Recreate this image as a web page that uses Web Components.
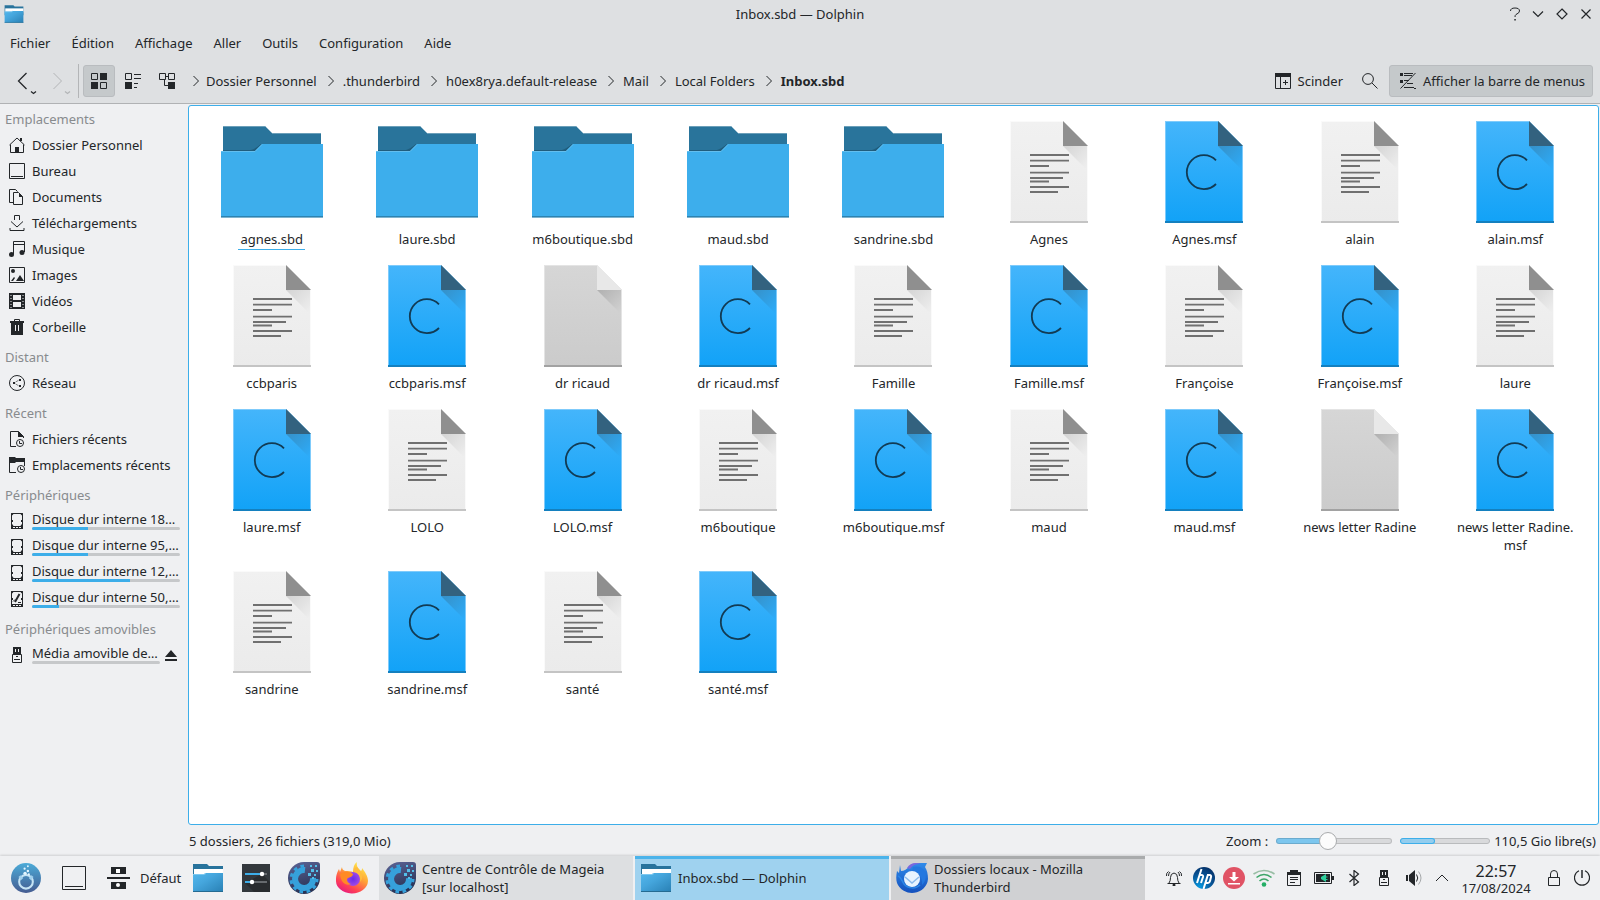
<!DOCTYPE html>
<html lang="fr">
<head>
<meta charset="utf-8">
<title>Inbox.sbd — Dolphin</title>
<style>
  body {
    margin: 0;
    font: 13px/18px "Noto Sans", sans-serif;
    color: #232629;
    background: #eff0f2;
  }
</style>
</head>
<body>
<desktop-screen></desktop-screen>

<script>
// name: [width, height, markup]; strokes use the current colour, class "f" is a fill
const icons = {
  folder: [112, 112, `
    <path fill="#29749b" stroke="none" d="M7 10h42l7 7h49v20H7z"/>
    <path stroke="#6b9fb9" d="M56 17.5h49M7 10.5h42"/>
    <path fill="#205d7d" stroke="none" d="M7 34h28q4-1 10-6v8H7z"/>
    <path fill="#3daeec" stroke="none" d="M5 35h34l7-7h61v73H5z"/>
    <path stroke="#63beee" d="M5 35.5h34l7-7"/>
    <path stroke="#2d83b1" d="M5 100.5h102"/>
    <path stroke="#7fb4cf" d="M5 101.5h102"/>`],
  text: [112, 112, `
    <defs>
      <linearGradient id="p" x2="0" y2="1"><stop stop-color="#f1f1f1"/><stop offset="1" stop-color="#ebebeb"/></linearGradient>
      <linearGradient id="s" x2="1" y2="1"><stop stop-color="#d4d4d4"/><stop offset=".9" stop-color="#eee"/></linearGradient>
    </defs>
    <path fill="url(#p)" stroke="none" d="M17 5h53l25 25v77H17z"/>
    <path fill="url(#s)" stroke="none" d="M70 30l25 25V30z"/>
    <path fill="#8f8f8f" stroke="none" d="M70 5l25 25H70z"/>
    <path stroke="#fafafa" d="M17 5.5h53M17.5 6v100M94.5 30v76"/>
    <path stroke="#c4c4c4" stroke-width="2" d="M17 106h78"/>
    <path stroke="#707070" stroke-width="1.8" d="M37 39h39M37 44.6h39M37 50h19M37 56.6h39M37 62h33M37 65.5h19M37 71h39M37 76h28"/>`],
  msf: [112, 112, `
    <defs>
      <linearGradient id="p" x2="0" y2="1"><stop stop-color="#44b5fb"/><stop offset="1" stop-color="#11a2f7"/></linearGradient>
      <linearGradient id="s" x2="1" y2="1"><stop stop-color="#3690c7"/><stop offset=".9" stop-color="#2dabf8"/></linearGradient>
    </defs>
    <path fill="url(#p)" stroke="none" d="M17 5h53l25 25v77H17z"/>
    <path fill="url(#s)" stroke="none" d="M70 30l25 25V30z"/>
    <path fill="#33627f" stroke="none" d="M70 5l25 25H70z"/>
    <path stroke="#7fcbfb" d="M17 5.5h53M17.5 6v100M94.5 30v76"/>
    <path stroke="#1480bf" stroke-width="2" d="M17 106h78"/>
    <path stroke="#123b54" stroke-width="1.8" d="M68 44.3A17 17 0 1 0 68 68"/>`],
  blank: [112, 112, `
    <defs>
      <linearGradient id="p" x2="0" y2="1"><stop stop-color="#d6d6d6"/><stop offset="1" stop-color="#cbcbcb"/></linearGradient>
      <linearGradient id="s" x2="1" y2="1"><stop stop-color="#b0b0b0"/><stop offset=".9" stop-color="#d1d1d1"/></linearGradient>
    </defs>
    <path fill="url(#p)" stroke="none" d="M17 5h53l25 25v77H17z"/>
    <path fill="url(#s)" stroke="none" d="M70 30l25 25V30z"/>
    <path fill="#e8e8e8" stroke="none" d="M70 5l25 25H70z"/>
    <path stroke="#e4e4e4" d="M17 5.5h53M17.5 6v100M94.5 30v76"/>
    <path stroke="#a2a2a2" stroke-width="2" d="M17 106h78"/>`],
  folderApp: [32, 32, `
    <defs><linearGradient id="a" x2="1" y2="1"><stop stop-color="#53b7ec"/><stop offset=".4" stop-color="#45a6dd"/><stop offset="1" stop-color="#2980b4"/></linearGradient></defs>
    <path fill="#28739c" stroke="none" d="M1 2h14l2 2h14v14H1z"/>
    <path fill="#fff" stroke="none" d="M2 7h29v6H2z"/>
    <path fill="url(#a)" stroke="none" d="M1 12h11l2-1h17v19H1z"/>
    <path stroke="#7cc8f0" d="M1 12.5h11l2-1"/>
    <path stroke="#256b92" d="M1 29.5h30"/>`],
  back: [28, 32, `<path d="M14.5 8l-8 8 8 8" stroke-width="1.3"/><path d="M19 26.5l2.5 2 2.5-2" stroke-width="1.3"/>`],
  forward: [28, 32, `<path d="M7.5 8l8 8-8 8"/><path d="M19 26.5l2.5 2 2.5-2" stroke-width="1.3"/>`],
  grid: [16, 16, `<path d="M.5.5h6v6h-6zM9.5 9.5h6v6h-6z"/><path class="f" d="M9 0h7v7H9zM0 9h7v7H0z"/>`],
  compact: [16, 16, `<path d="M.5.5h6v6h-6zM9 1.5h7M9 5.5h7M9 10.5h4M9 14.5h3"/><path class="f" d="M0 9h7v7H0z"/>`],
  tree: [16, 16, `<path d="M.5.5h6v6h-6zM9.5.5h6v6h-6zM7 3.5h2M5.5 7v5.5h4"/><path class="f" d="M9 9h7v7H9z"/>`],
  crumb: [6, 12, `<path d="M.5 1l5 5-5 5"/>`],
  split: [16, 16, `<path d="M.5.5h15v15H.5zM5.5 4v12M8 9.5h5M10.5 7v5"/><path class="f" d="M0 0h16v4H0z"/>`],
  search: [16, 16, `<circle cx="6" cy="6" r="5.4"/><path d="M10 10l5.5 5.5"/>`],
  menus: [16, 16, `<path class="f" d="M0 0h3v3H0zM0 7h3v3H0zM14 15h2v1h-2z"/><path d="M4 .5h9M4 2.5h8M4 7.5h5M7 10.5h6M4 14.5h10M15.5 0L.5 15.5"/>`],
  help: [14, 14, `<path d="M2.5 4Q2.5 1 7 1t4.5 3Q11.5 6 8 7.5 7 8 7 10"/><path class="f" d="M6.3 12h1.5v1.5H6.3z"/>`],
  down: [12, 12, `<path d="M1 3.5l5 5 5-5" stroke-width="1.2"/>`],
  diamond: [12, 12, `<path d="M6 1l5 5-5 5-5-5z" stroke-width="1.2"/>`],
  close: [12, 12, `<path d="M1.5 1.5l9 9m0-9l-9 9" stroke-width="1.2"/>`],
  home: [16, 16, `<path d="M.5 8L8 1l7.5 7M1.5 7.5v8h13v-8"/><path class="f" d="M6 10h4v6H6zM11 1h2v3h-2z"/>`],
  desk: [16, 16, `<path d="M.5.5h15v15H.5zM2 13.5h12"/>`],
  docs: [16, 16, `<path d="M4 13.5H.5V.5h6l2 2M4.5 3.5h5l4 4v8h-9z"/><path class="f" d="M5 0l5 4v4h4L9 3z"/>`],
  download: [16, 16, `<path d="M5.5 5V.5h5V5M2 6.5L8 12l6-5.5M1 13v2.5h14V13"/>`],
  music: [16, 16, `<path d="M4.5 13V.5h11V11M4.5 3.5h11"/><circle class="f" cx="2.5" cy="13.5" r="2.5"/><circle class="f" cx="13" cy="11.5" r="2.5"/>`],
  image: [16, 16, `<path d="M.5.5h15v15H.5z"/><circle class="f" cx="4" cy="4" r="2"/><path class="f" d="M7 14l4-6 4 6zM2 14l3-4 1 1-2 3z"/>`],
  video: [16, 16, `<path class="f" d="M0 0h4v16H0zM12 0h4v16h-4z"/><path d="M1 1h14M1 15h14M3 8h10" stroke-width="2"/><path stroke="#eff0f2" stroke-dasharray="1 2" d="M2 2v13M14 2v13"/>`],
  trash: [16, 16, `<path class="f" d="M1 2h14v2h-1v12H2V4H1z"/><path d="M5.5 2V.5h5V2"/><path stroke="#eff0f2" d="M6.5 6v6M9.5 6v6"/>`],
  network: [16, 16, `<circle cx="8" cy="8" r="7.5"/><path stroke-dasharray="1 1" d="M5 8l5-3M5 8l5 3"/><path class="f" d="M4 7h2v2H4zM10 4h2v2h-2zM10 10h2v2h-2z"/>`],
  recentFile: [16, 16, `<path d="M7 15.5H1.5V.5h8l5 5V7"/><path class="f" d="M9 0l6 6H9z"/><circle cx="11" cy="12" r="3.5"/><path d="M10.5 10v2.5H13"/>`],
  recentDir: [16, 16, `<path class="f" d="M0 0h6l1 1h9v4H7L6 6H0z"/><path d="M.5 6v9.5H7M15.5 5v4"/><circle cx="12" cy="12" r="3.5"/><path d="M11.5 10v2.5H14"/>`],
  disk: [16, 16, `<path d="M2.5.5h11v15h-11zM3 13.5h10M6.5 13v3M9.5 13v3"/><path class="f" d="M2 0h3L3.5 2.5zM14 0h-3l1.5 2.5zM2 14l1.5-3L5 14zM14 14l-1.5-3-1.5 3zM3 7h1v2H3zM12 7h1v2h-1zM2 14h2v2H2zM12 14h2v2h-2z"/>`],
  diskRoot: [16, 16, `<path d="M2.5.5h11v15h-11zM3 13.5h10M6.5 13v3M9.5 13v3"/><path class="f" d="M2 0h3L3.5 2.5zM14 0h-3l1.5 2.5zM2 14h2v2H2zM12 14h2v2h-2zM3 7h1v2H3zM12 7h1v2h-1z"/><path d="M10.5 3L6 11" stroke-width="2"/><path d="M4 10.5l2-2M9 11.5h3"/>`],
  usb: [16, 16, `<path class="f" d="M4 0h8v7H4z"/><path d="M3.5 7.5h9v8h-9zM5 12.5h6M7 9.5h2"/><path stroke="#eff0f2" d="M6.5 2v3M9.5 2v3"/>`],
  eject: [12, 12, `<path class="f" d="M0 8l6-7 6 7zM0 10h12v2H0z"/>`],
  mageia: [32, 32, `
    <defs><linearGradient id="m" x2="0" y2="1"><stop stop-color="#4cabd8"/><stop offset="1" stop-color="#455c91"/></linearGradient></defs>
    <circle cx="16" cy="16" r="16" fill="url(#m)" stroke="none"/>
    <circle cx="16" cy="20" r="7.3" stroke="#c6e4f5" stroke-width="2.2"/>
    <path stroke="#9fd0ee" stroke-width="3" d="M9 14l3 3M23 14l-3 3"/>
    <g fill="#e4f6ff" stroke="none"><circle cx="15" cy="11" r="1.8"/><circle cx="18" cy="8.5" r="1.3"/><circle cx="14.5" cy="6" r="1.2"/><circle cx="18" cy="3.5" r="1"/><circle cx="19" cy="12" r="1.2"/></g>`],
  desktop: [24, 24, `<path d="M.5.5h23v23H.5zM3 20.5h18"/>`],
  activity: [24, 24, `<path class="f" d="M5 1h15v7H5zM1 11h23v2H1zM5 16h15v7H5z"/><path fill="#fff" stroke="none" d="M10 3h4v4h-4z"/><circle cx="12" cy="19" r="2" fill="#fff" stroke="none"/>`],
  settings: [32, 32, `
    <path fill="#33383d" stroke="none" d="M2 2h28v28H2z"/><path fill="#292c2f" stroke="none" d="M5 21l17-9 8 8v10H14z"/>
    <path stroke="#3daee9" stroke-width="2" d="M5 12h18M5 20h8"/><path stroke="#666a6e" stroke-width="2" d="M24 12h3M13 20h14"/>
    <g fill="#fff" stroke="none"><circle cx="22" cy="12" r="2.2"/><circle cx="12" cy="20" r="2.2"/></g>`],
  gear: [32, 32, `
    <defs><linearGradient id="g" x2=".3" y2="1"><stop stop-color="#5d6597"/><stop offset="1" stop-color="#283153"/></linearGradient></defs>
    <path fill="url(#g)" stroke="none" d="M16 0h13q3 0 3 3v13A16 16 0 1 1 16 0z"/>
    <path stroke="#36a1db" stroke-width="6" d="M17 8A9 9 0 1 0 25 16"/>
    <path stroke="#36a1db" stroke-width="3" stroke-dasharray="3.6 3.6" d="M16 4A13 13 0 1 0 29 17"/>
    <g fill="#53bfe9" stroke="none"><path d="M23 7h3v3h-3zM20 11h3v3h-3zM26 12h2v2h-2zM28 8h2v2h-2zM22 3h2v2h-2zM27 3h2v2h-2zM24 15h2v2h-2z"/></g>`],
  firefox: [32, 32, `
    <defs>
      <linearGradient id="f" x1=".8" x2=".2" y2="1"><stop stop-color="#fff44f"/><stop offset=".4" stop-color="#ffa436"/><stop offset=".75" stop-color="#ff4055"/><stop offset="1" stop-color="#e31587"/></linearGradient>
      <radialGradient id="v"><stop stop-color="#6a2bea"/><stop offset="1" stop-color="#a04ae8"/></radialGradient>
    </defs>
    <path fill="url(#f)" stroke="none" d="M21 0c-1 4 1 6 4 9 1-1 1-2 1-3 3 4 6 8 6 13a16 13 0 0 1-32-1C0 12 2 9 3 7l1 3 2-5c0 2 1 3 3 4 4 0 6 0 8 1 0-4 1-8 4-10z"/>
    <circle cx="17" cy="17" r="7" fill="url(#v)" stroke="none"/>
    <path fill="#ff8a25" stroke="none" d="M4 12c4-3 9-3 13 0 0 2-2 3-5 4-2 1-1 5 3 6-4 2-10 0-11-10z"/>
    <path fill="#ffbd3e" stroke="none" d="M18 10c5 1 7 5 6 10 3-3 3-7 0-11l-3-4c-3 1-3 3-3 5z"/>`],
  thunderbird: [32, 32, `
    <defs><linearGradient id="t" x2="0" y2="1"><stop stop-color="#2f8bea"/><stop offset="1" stop-color="#1450bd"/></linearGradient></defs>
    <path fill="url(#t)" stroke="none" d="M4 3l1 6c3 0 6-2 9-5 3-3 7-3 11-3h6l-2 4c2 3 3 7 3 12A16 15 0 0 1 1 21C0 18 0 14 1 9l2 2z"/>
    <path fill="#7a68de" stroke="none" d="M11 6c3-5 8-6 14-4-6 0-8 1-11 5z"/>
    <path fill="#2378e0" stroke="none" d="M17 5c6-2 11 1 13 7 0 5-1 8-4 11 1-7-3-13-10-14z"/>
    <circle cx="16" cy="17" r="8" fill="#e8f4ff" stroke="none"/>
    <path stroke="#8dbbec" stroke-width="1.5" d="M9 15l7 6 7-6"/>
    <path stroke="#2b86e6" stroke-width="1.5" d="M2 14c3 1 4 5 6 8 4 5 12 5 16 1"/>`],
  bell: [16, 16, `<path d="M1.5 13.5h13M3 13q1.5-2 1.5-5.5 0-4 3.5-4.5 3.5.5 3.5 4.5Q11.5 11 13 13M2.5 1.5Q0 3 .5 6M13.5 1.5Q16 3 15.5 6M4 2Q2.5 3.5 2.5 6M12 2q1.5 1.5 1.5 4"/><circle class="f" cx="8" cy="15" r="1.5"/>`],
  hp: [22, 22, `
    <defs><radialGradient id="h" cx=".3" cy=".9" r="1"><stop stop-color="#0598e0"/><stop offset=".6" stop-color="#085091"/><stop offset="1" stop-color="#062d62"/></radialGradient></defs>
    <circle cx="11" cy="11" r="11" fill="url(#h)" stroke="none"/>
    <path stroke="#fff" stroke-width="2" d="M8.5 2L4 16M6.5 8h2q2 0 1.5 2L8 16M15 7.5L10.5 22M14 8h2.5q2 0 1.5 2l-1 4q-.5 2-2 2h-2.5"/>`],
  update: [22, 22, `<circle cx="11" cy="11" r="11" fill="#e05365" stroke="none"/><path fill="#fff" stroke="none" d="M9.5 5h3v5H16l-5 4.5L6 10h3.5zM5 16h12v1.5H5z"/>`],
  wifi: [22, 22, `<path stroke="#98bda4" stroke-width="1.6" d="M.5 7Q11 0 21.5 7"/><path stroke="#3da568" stroke-width="1.6" d="M3.5 10.5q7.5-6 15 0M6.5 14q4.5-4 9 0"/><circle cx="11" cy="17.5" r="2.3" fill="#22ae65" stroke="none"/>`],
  clip: [16, 16, `<path d="M1.5 2.5h13v13h-13zM4 7.5h8M4 9.5h8M4 12.5h5"/><path class="f" d="M4 0h8v2h3v3H1V2h3z"/>`],
  battery: [20, 12, `<path d="M.5.5h17v11H.5z"/><path class="f" d="M2 2h14v8H2zM18 4h2v4h-2z"/><path fill="#2fd09d" stroke="none" d="M7 5l5-3v2.5h1.5v1H12V7h1.5v1H12v2L7 7z"/>`],
  bluetooth: [16, 16, `<path d="M3.5 4l9 8L8 15.5V.5L12.5 4l-9 8" stroke-width="1.2"/>`],
  volume: [16, 16, `<path class="f" d="M0 5h2v6H0zM3 5l6-5v16l-6-5z"/><path d="M10.5 4.5q2.5 3.5 0 7"/><path stroke="#a5a8aa" d="M12.5 1.5q5 6.5 0 13"/>`],
  up: [12, 12, `<path d="M0 9l6-6 6 6"/>`],
  lock: [12, 16, `<path d="M.5 7.5h11v8H.5zM2.5 7V4Q2.5.5 6 .5T9.5 4v3"/>`],
  power: [16, 16, `<path d="M5 .8a7.5 7.5 0 1 0 6 0" stroke-width="1.2"/><path d="M8 0v8" stroke-width="1.5"/>`],
};

// setup runs on the detached copy, so nested elements connect with their attributes in place
const define = (name, css, markup, setup) => {
  const template = document.createElement("template");
  template.innerHTML = `<style>
    :host { display: block; box-sizing: border-box; }
    * { box-sizing: border-box; }
    button { font: inherit; color: inherit; background: none; border: 0; padding: 0; margin: 0; }
    a { color: inherit; text-decoration: none; }
    ${css}
  </style>${markup}`;

  window.customElements.define(name, class extends HTMLElement {
    constructor() {
      super();
      this.attachShadow({ mode: "open" });
    }

    connectedCallback() {
      if (this.shadowRoot.childNodes.length) return;
      const content = template.content.cloneNode(true);
      if (setup) setup(this, content);
      this.shadowRoot.appendChild(content);
    }
  });
};

define("app-icon", `
  :host { flex: none; }
  svg { display: block; fill: none; stroke: currentColor; }
  .f { fill: currentColor; stroke: none; }
`, `<svg aria-hidden="true"></svg>`, (host, root) => {
  const [w, h, markup] = icons[host.getAttribute("name")];
  const size = Number(host.getAttribute("size")) || w;
  const svg = root.querySelector("svg");
  svg.setAttribute("viewBox", `0 0 ${w} ${h}`);
  svg.setAttribute("width", size);
  svg.setAttribute("height", size * h / w);
  svg.innerHTML = markup;
});

define("title-bar", `
  :host { display: grid; grid-template-columns: 1fr auto 1fr; align-items: center; height: 28px; padding: 0 4px; }
  .buttons { display: flex; justify-content: flex-end; gap: 12px; padding-right: 4px; }
  button { display: grid; place-items: center; width: 12px; height: 16px; }
`, `
  <app-icon name="folderApp" size="20"></app-icon>
  <span><slot></slot></span>
  <div class="buttons">
    <button aria-label="Aide"><app-icon name="help"></app-icon></button>
    <button aria-label="Réduire"><app-icon name="down"></app-icon></button>
    <button aria-label="Agrandir"><app-icon name="diamond"></app-icon></button>
    <button aria-label="Fermer"><app-icon name="close"></app-icon></button>
  </div>
`);

define("menu-bar", `
  nav { display: flex; gap: 1px; height: 30px; }
  button { padding: 0 10px; }
`, `
  <nav>
    <button>Fichier</button><button>Édition</button><button>Affichage</button><button>Aller</button>
    <button>Outils</button><button>Configuration</button><button>Aide</button>
  </nav>
`);

define("tool-button", `
  button { display: flex; align-items: center; gap: 7px; height: 32px; padding: 0 7px; border: 1px solid transparent; border-radius: 3px; white-space: nowrap; }
  :host([flat]) button { padding: 0; border: 0; }
  :host([wide]) button { padding: 0 7px 0 10px; }
  :host([active]) button { background: #c5c9cb; border-color: #b9bcbf; }
  :host([off]) { color: #b3b5b7; }
`, `<button><app-icon></app-icon><slot></slot></button>`, (host, root) => {
  root.querySelector("app-icon").setAttribute("name", host.getAttribute("icon"));
  root.querySelector("button").setAttribute("aria-label", host.title || host.textContent);
  root.querySelector("button").disabled = host.hasAttribute("off");
});

define("path-bar", `
  nav { display: flex; align-items: center; white-space: nowrap; }
  app-icon { margin: 0 9px 0 11px; }
  app-icon:first-child { margin: 0 7px 0 0; }
  a:last-child { font-weight: bold; }
`, `<nav aria-label="Chemin"></nav>`, (host, root) => {
  root.querySelector("nav").innerHTML = host.getAttribute("path").split("/")
    .map(part => `<app-icon name="crumb"></app-icon><a href="#">${ part }</a>`).join("");
});

define("tool-bar", `
  :host { display: flex; align-items: center; height: 46px; padding: 0 7px 0 12px; border-bottom: 1px solid #b0b2b4; }
  .history { display: flex; gap: 6px; }
  .rule { width: 1px; height: 34px; margin: 0 4px; background: #b3b5b7; }
  .modes { display: flex; gap: 2px; }
  path-bar { flex: 1; margin-left: 10px; }
  .right { display: flex; gap: 3px; }
`, `
  <div class="history">
    <tool-button flat icon="back" title="Précédent"></tool-button>
    <tool-button flat off icon="forward" title="Suivant"></tool-button>
  </div>
  <div class="rule"></div>
  <div class="modes">
    <tool-button active icon="grid" title="Icônes"></tool-button>
    <tool-button icon="compact" title="Compact"></tool-button>
    <tool-button icon="tree" title="Détails"></tool-button>
  </div>
  <path-bar path="Dossier Personnel/.thunderbird/h0ex8rya.default-release/Mail/Local Folders/Inbox.sbd"></path-bar>
  <div class="right">
    <tool-button wide icon="split">Scinder</tool-button>
    <tool-button icon="search" title="Rechercher"></tool-button>
    <tool-button wide active icon="menus">Afficher la barre de menus</tool-button>
  </div>
`);

define("place-item", `
  a { display: flex; align-items: center; gap: 7px; height: 26px; padding: 0 8px 0 9px; }
  .label { flex: 1; display: grid; white-space: nowrap; }
  progress { display: block; appearance: none; width: 100%; height: 3px; border: 0; margin: -1px 0 2px; border-radius: 2px; overflow: hidden; }
  progress::-webkit-progress-bar { background: #c6c8ca; }
  progress::-webkit-progress-value { background: #3daee9; }
  .eject { margin: 0 3px 0 -2px; }
`, `<a href="#"><app-icon></app-icon><span class="label"><slot></slot></span></a>`, (host, root) => {
  root.querySelector("app-icon").setAttribute("name", host.getAttribute("icon"));
  if (host.hasAttribute("used")) {
    root.querySelector(".label").insertAdjacentHTML("beforeend",
      `<progress max="100" value="${ host.getAttribute("used") }" aria-label="Espace utilisé"></progress>`);
  }
  if (host.hasAttribute("removable")) {
    root.querySelector("a").insertAdjacentHTML("beforeend", `<app-icon class="eject" name="eject"></app-icon>`);
  }
});

define("place-group", `
  h2 { margin: 0; padding: 4px 5px 0; font: inherit; line-height: 26px; color: #888b8e; }
  :host(:first-of-type) h2 { padding-top: 0; }
`, `<h2></h2><slot></slot>`, (host, root) => {
  root.querySelector("h2").textContent = host.getAttribute("label");
});

define("places-panel", `
  :host { width: 188px; padding-top: 2px; }
`, `
  <place-group label="Emplacements">
    <place-item icon="home">Dossier Personnel</place-item>
    <place-item icon="desk">Bureau</place-item>
    <place-item icon="docs">Documents</place-item>
    <place-item icon="download">Téléchargements</place-item>
    <place-item icon="music">Musique</place-item>
    <place-item icon="image">Images</place-item>
    <place-item icon="video">Vidéos</place-item>
    <place-item icon="trash">Corbeille</place-item>
  </place-group>
  <place-group label="Distant">
    <place-item icon="network">Réseau</place-item>
  </place-group>
  <place-group label="Récent">
    <place-item icon="recentFile">Fichiers récents</place-item>
    <place-item icon="recentDir">Emplacements récents</place-item>
  </place-group>
  <place-group label="Périphériques">
    <place-item icon="disk" used="38">Disque dur interne 18…</place-item>
    <place-item icon="disk" used="38">Disque dur interne 95,…</place-item>
    <place-item icon="disk" used="66">Disque dur interne 12,…</place-item>
    <place-item icon="diskRoot" used="18">Disque dur interne 50,…</place-item>
  </place-group>
  <place-group label="Périphériques amovibles">
    <place-item icon="usb" used="0" removable>Média amovible de…</place-item>
  </place-group>
`);

define("file-item", `
  a { display: flex; flex-direction: column; align-items: center; gap: 2px; padding: 0 8px; text-align: center; }
  span { padding: 0 2px; }
  :host([current]) span { padding-bottom: 1px; margin-bottom: -2px; border-bottom: 1px solid #3daee9; }
`, `<a href="#"><app-icon></app-icon><span><slot></slot></span></a>`, (host, root) => {
  root.querySelector("app-icon").setAttribute("name", host.getAttribute("type"));
});

const files = [
  "agnes.sbd", "laure.sbd", "m6boutique.sbd", "maud.sbd", "sandrine.sbd",
  "Agnes", "Agnes.msf", "alain", "alain.msf", "ccbparis", "ccbparis.msf",
  "dr ricaud", "dr ricaud.msf", "Famille", "Famille.msf", "Françoise",
  "Françoise.msf", "laure", "laure.msf", "LOLO", "LOLO.msf", "m6boutique",
  "m6boutique.msf", "maud", "maud.msf", "news letter Radine",
  "news letter Radine.msf", "sandrine", "sandrine.msf", "santé", "santé.msf",
];
const empty = [ "dr ricaud", "news letter Radine" ];

function fileType(name) {
  if (name.endsWith(".sbd")) return "folder";
  if (name.endsWith(".msf")) return "msf";
  return empty.includes(name) ? "blank" : "text";
}

define("file-view", `
  :host { margin: 1px 1px 0 0; border: 1px solid #3daee9; border-radius: 3px; background: #fff; }
  main { display: grid; grid-template-columns: repeat(9, 1fr); gap: 12px 0; padding: 10px 5px; }
`, `<main></main>`, (host, root) => {
  root.querySelector("main").innerHTML = files.map((name, i) =>
    `<file-item type="${ fileType(name) }"${ i ? "" : " current" }>${ name.replace(".msf", ".<wbr>msf") }</file-item>`
  ).join("");
});

define("status-bar", `
  :host { display: flex; align-items: center; height: 31px; padding: 0 4px 0 1px; }
  .info { flex: 1; }
  input { appearance: none; width: 116px; height: 18px; margin: 0 8px; background: none; }
  input::-webkit-slider-runnable-track {
    height: 6px; border-radius: 3px; box-shadow: inset 0 0 0 1px #0002;
    background: linear-gradient(90deg, #7cc6ee 45%, #d9dadc 45%);
  }
  input::-webkit-slider-thumb {
    appearance: none; width: 18px; height: 18px; margin-top: -6px;
    border: 1px solid #a9abad; border-radius: 50%; background: #fcfcfc;
  }
  progress { appearance: none; width: 90px; height: 6px; margin-right: 4px; border: 0; border-radius: 3px; overflow: hidden; }
  progress::-webkit-progress-bar { background: #d9dadc; border-radius: 3px; box-shadow: inset 0 0 0 1px #b9bbbd; }
  progress::-webkit-progress-value { background: #93cdee; border-radius: 3px; box-shadow: inset 0 0 0 1px #3daee9; }
`, `
  <span class="info">5 dossiers, 26 fichiers (319,0 Mio)</span>
  <label for="zoom">Zoom :</label>
  <input id="zoom" type="range" min="0" max="100" value="44">
  <progress max="100" value="39" aria-label="Espace disque"></progress>
  <span>110,5 Gio libre(s)</span>
`);

define("dolphin-window", `
  :host { flex: 1; display: flex; flex-direction: column; min-height: 0; }
  header { background: #dee0e2; }
  .body { flex: 1; display: flex; }
  .content { flex: 1; display: flex; flex-direction: column; }
  file-view { flex: 1; }
`, `
  <header>
    <title-bar>Inbox.sbd — Dolphin</title-bar>
    <menu-bar></menu-bar>
    <tool-bar></tool-bar>
  </header>
  <div class="body">
    <places-panel></places-panel>
    <div class="content">
      <file-view></file-view>
      <status-bar></status-bar>
    </div>
  </div>
`);

define("task-button", `
  :host { flex: 1; display: flex; }
  button { flex: 1; display: flex; align-items: center; gap: 6px; padding: 0 5px; text-align: left; background: #dddfe1; }
  :host([state=active]) button { background: #9fd2ef; box-shadow: inset 0 3px #4bb3ea; }
  :host([state=attention]) button { background: #d0d1d3; box-shadow: inset 0 3px #a9abac; }
`, `<button><app-icon size="32"></app-icon><span><slot></slot></span></button>`, (host, root) => {
  root.querySelector("app-icon").setAttribute("name", host.getAttribute("icon"));
});

define("task-bar", `
  :host { display: flex; height: 44px; padding: 0 4px 0 2px; background: #eff0f2; box-shadow: 0 -1px 2px #0002; }
  button { display: grid; place-items: center; }
  .launch { display: flex; }
  .launch button { width: 48px; }
  .launch .activity { display: flex; width: 86px; align-items: center; padding-left: 8px; gap: 10px; }
  .tasks { flex: 1; display: flex; gap: 2px; margin: 0 14px 0 3px; }
  .tray { display: flex; }
  .tray button { width: 30px; }
  .tray .more { width: 26px; }
  .clock { width: 82px; padding-top: 5px; margin-right: 3px; text-align: center; line-height: 14px; }
  .clock time { display: block; font-size: 16px; line-height: 20px; }
  .session { display: flex; }
  .session button { width: 28px; }
`, `
  <div class="launch">
    <button aria-label="Menu"><app-icon name="mageia" size="30"></app-icon></button>
    <button aria-label="Bureau"><app-icon name="desktop"></app-icon></button>
    <button class="activity"><app-icon name="activity"></app-icon>Défaut</button>
    <button aria-label="Fichiers"><app-icon name="folderApp"></app-icon></button>
    <button aria-label="Réglages"><app-icon name="settings"></app-icon></button>
    <button aria-label="Centre de contrôle"><app-icon name="gear"></app-icon></button>
    <button aria-label="Firefox"><app-icon name="firefox"></app-icon></button>
  </div>
  <div class="tasks">
    <task-button icon="gear">Centre de Contrôle de Mageia [sur localhost]</task-button>
    <task-button icon="folderApp" state="active">Inbox.sbd — Dolphin</task-button>
    <task-button icon="thunderbird" state="attention">Dossiers locaux - Mozilla Thunderbird</task-button>
  </div>
  <div class="tray">
    <button aria-label="Notifications"><app-icon name="bell"></app-icon></button>
    <button aria-label="HP"><app-icon name="hp"></app-icon></button>
    <button aria-label="Mises à jour"><app-icon name="update"></app-icon></button>
    <button aria-label="Réseau"><app-icon name="wifi"></app-icon></button>
    <button aria-label="Presse-papiers"><app-icon name="clip"></app-icon></button>
    <button aria-label="Batterie"><app-icon name="battery"></app-icon></button>
    <button aria-label="Bluetooth"><app-icon name="bluetooth"></app-icon></button>
    <button aria-label="Périphériques"><app-icon name="usb"></app-icon></button>
    <button aria-label="Volume"><app-icon name="volume"></app-icon></button>
    <button class="more" aria-label="Plus"><app-icon name="up"></app-icon></button>
  </div>
  <div class="clock"><time>22:57</time>17/08/2024</div>
  <div class="session">
    <button aria-label="Verrouiller"><app-icon name="lock"></app-icon></button>
    <button aria-label="Éteindre"><app-icon name="power"></app-icon></button>
  </div>
`);

define("desktop-screen", `
  :host { display: flex; flex-direction: column; min-height: 100vh; }
`, `
  <dolphin-window></dolphin-window>
  <task-bar></task-bar>
`);
</script>
</body>
</html>
